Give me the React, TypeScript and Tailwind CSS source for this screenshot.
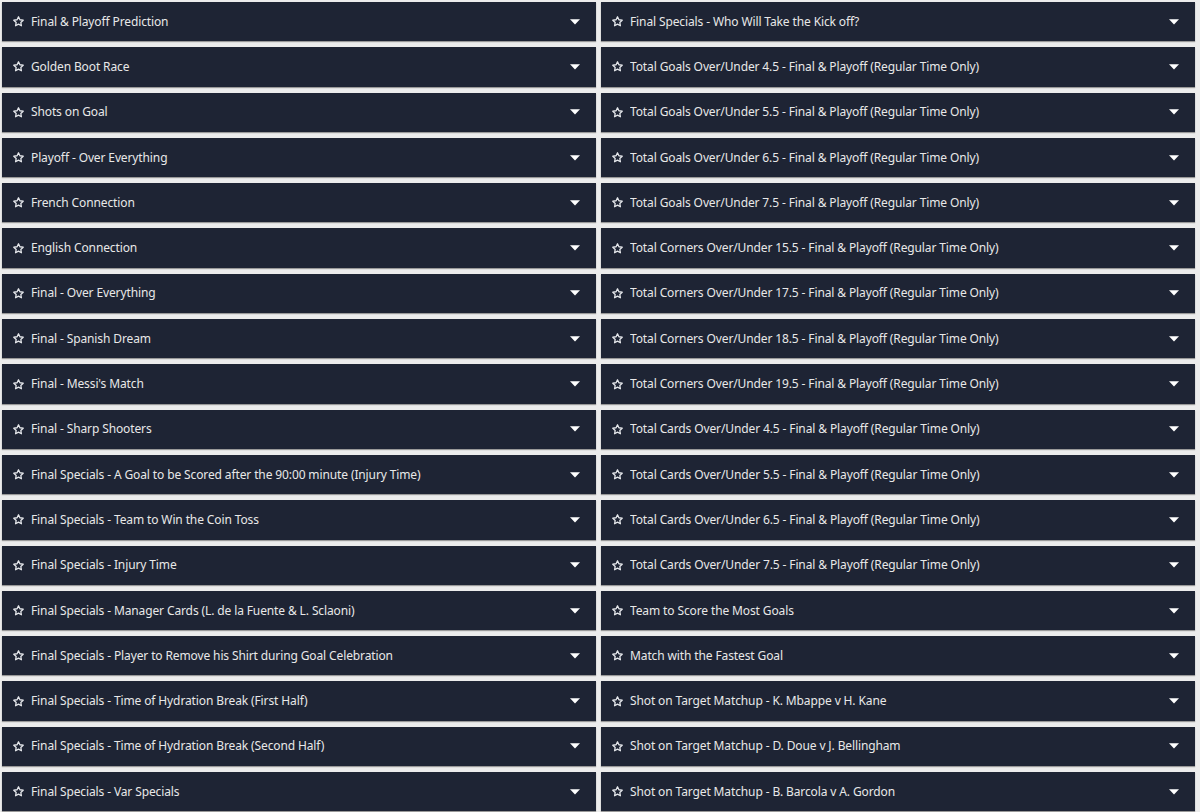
import React from "react";

const left = [
  "Final & Playoff Prediction",
  "Golden Boot Race",
  "Shots on Goal",
  "Playoff - Over Everything",
  "French Connection",
  "English Connection",
  "Final - Over Everything",
  "Final - Spanish Dream",
  "Final - Messi's Match",
  "Final - Sharp Shooters",
  "Final Specials - A Goal to be Scored after the 90:00 minute (Injury Time)",
  "Final Specials - Team to Win the Coin Toss",
  "Final Specials - Injury Time",
  "Final Specials - Manager Cards (L. de la Fuente & L. Sclaoni)",
  "Final Specials - Player to Remove his Shirt during Goal Celebration",
  "Final Specials - Time of Hydration Break (First Half)",
  "Final Specials - Time of Hydration Break (Second Half)",
  "Final Specials - Var Specials",
];

const right = [
  "Final Specials - Who Will Take the Kick off?",
  "Total Goals Over/Under 4.5 - Final & Playoff (Regular Time Only)",
  "Total Goals Over/Under 5.5 - Final & Playoff (Regular Time Only)",
  "Total Goals Over/Under 6.5 - Final & Playoff (Regular Time Only)",
  "Total Goals Over/Under 7.5 - Final & Playoff (Regular Time Only)",
  "Total Corners Over/Under 15.5 - Final & Playoff (Regular Time Only)",
  "Total Corners Over/Under 17.5 - Final & Playoff (Regular Time Only)",
  "Total Corners Over/Under 18.5 - Final & Playoff (Regular Time Only)",
  "Total Corners Over/Under 19.5 - Final & Playoff (Regular Time Only)",
  "Total Cards Over/Under 4.5 - Final & Playoff (Regular Time Only)",
  "Total Cards Over/Under 5.5 - Final & Playoff (Regular Time Only)",
  "Total Cards Over/Under 6.5 - Final & Playoff (Regular Time Only)",
  "Total Cards Over/Under 7.5 - Final & Playoff (Regular Time Only)",
  "Team to Score the Most Goals",
  "Match with the Fastest Goal",
  "Shot on Target Matchup - K. Mbappe v H. Kane",
  "Shot on Target Matchup - D. Doue v J. Bellingham",
  "Shot on Target Matchup - B. Barcola v A. Gordon",
];

// Outlined favourite star
function Star() {
  return (
    <svg width="11" height="11" viewBox="0 0 24 24" fill="none" stroke="#e5e7eb" strokeWidth="2.8" strokeLinejoin="round" className="shrink-0">
      <path d="M12 1.6l3.1 6.6 7.2.9-5.3 5 1.4 7.2L12 17.8l-6.4 3.5 1.4-7.2-5.3-5 7.2-.9z" />
    </svg>
  );
}

// Solid dropdown caret
function Caret() {
  return (
    <svg width="10" height="6" viewBox="0 0 10 6" className="shrink-0">
      <path d="M0 0.3h10L5 5.6z" fill="#ffffff" />
    </svg>
  );
}

function MarketRow({ title }: { title: string }) {
  return (
    <div className="flex h-[39.3px] items-center bg-[#1e2434] pl-[11px] pr-[16px] shadow-[0_1px_1px_rgba(0,0,0,0.35)]">
      <Star />
      <span className="ml-[7px] flex-1 truncate text-[12px] tracking-[-0.12px] text-[#e8e8e8]">{title}</span>
      <Caret />
    </div>
  );
}

export default function App() {
  return (
    <div
      className="h-[812px] w-[1200px] overflow-hidden bg-[#ececec] pl-[2px] pr-[5px] pt-[2px]"
      style={{ fontFamily: '"Noto Sans", "Open Sans", sans-serif' }}
    >
      <div className="grid grid-cols-2 gap-x-[5px]">
        <div className="flex flex-col gap-[6px]">
          {left.map((t) => (
            <MarketRow key={t} title={t} />
          ))}
        </div>
        <div className="flex flex-col gap-[6px]">
          {right.map((t) => (
            <MarketRow key={t} title={t} />
          ))}
        </div>
      </div>
    </div>
  );
}
